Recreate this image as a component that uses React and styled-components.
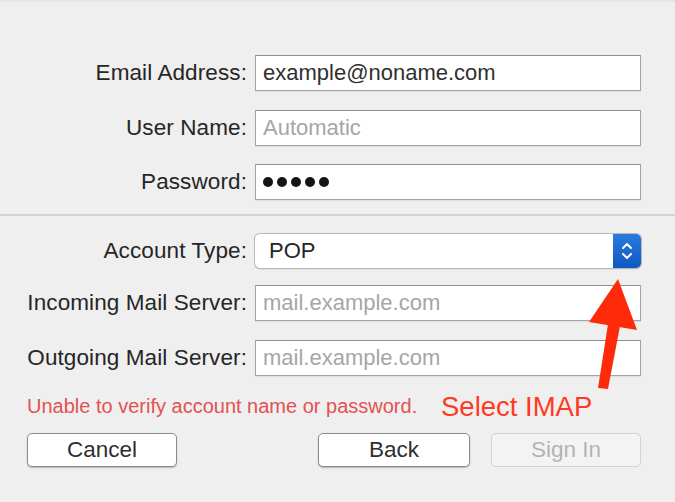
import React from 'react';
import styled, { createGlobalStyle } from 'styled-components';

const GlobalStyle = createGlobalStyle`
  html, body {
    margin: 0;
    padding: 0;
    background: #efefef;
  }
  body {
    font-family: "Liberation Sans", Arial, sans-serif;
  }
`;

const Sheet = styled.div`
  position: relative;
  width: 675px;
  height: 502px;
  overflow: hidden;
  background: #efefef;
  box-shadow: inset 0 3px 3px -2px rgba(0, 0, 0, 0.08);
  box-sizing: border-box;
`;

const Form = styled.div`
  display: grid;
  grid-template-columns: 247px 386px;
  column-gap: 8px;
  row-gap: 18.5px;
  align-items: center;
  padding-top: ${(p) => p.$top}px;
`;

const Label = styled.label`
  text-align: right;
  font-size: 22.5px;
  color: #262626;
  letter-spacing: 0.1px;
  white-space: nowrap;
`;

const Field = styled.div`
  height: 36px;
  box-sizing: border-box;
  background: #fff;
  border: 1.5px solid #a3a3a3;
  border-top-color: #8e8e8e;
  box-shadow: 0 1px 1px rgba(0, 0, 0, 0.06);
  display: flex;
  align-items: center;
  padding-left: 7px;
  font-size: 22px;
  color: ${(p) => (p.$placeholder ? '#a6a6a6' : '#303030')};
  white-space: nowrap;
  overflow: hidden;
`;

const Dots = styled.div`
  display: flex;
  gap: 4px;
`;

const Dot = styled.span`
  width: 10px;
  height: 10px;
  border-radius: 50%;
  background: #151515;
`;

const Separator = styled.div`
  margin-top: 14px;
  height: 1.5px;
  background: #d3d3d3;
`;

const Popup = styled.div`
  height: 34px;
  box-sizing: border-box;
  display: flex;
  background: #fff;
  border-radius: 5px;
  box-shadow: 0 0 0 1px #b8b8b8, 0 1px 1.5px rgba(0, 0, 0, 0.25);
  overflow: hidden;
  margin-top: -2px;
  margin-bottom: -1px;
`;

const PopupValue = styled.div`
  flex: 1;
  display: flex;
  align-items: center;
  padding-left: 14px;
  font-size: 22px;
  color: #262626;
`;

const PopupArrows = styled.div`
  width: 28px;
  display: flex;
  align-items: center;
  justify-content: center;
  background: linear-gradient(#2a7be0, #0f58bf);
`;

const Footer = styled.div`
  position: relative;
  padding: 0 34px 0 27px;
`;

const ErrorText = styled.div`
  margin-top: 19px;
  font-size: 20px;
  line-height: 22px;
  color: #e25252;
`;

const Buttons = styled.div`
  display: flex;
  gap: 21px;
  margin-top: 16px;
`;

const Button = styled.div`
  width: ${(p) => p.$width}px;
  height: 34px;
  box-sizing: border-box;
  display: flex;
  align-items: center;
  justify-content: center;
  border-radius: 5px;
  font-size: 22.5px;
  background: ${(p) => (p.$disabled ? '#f3f3f3' : '#fff')};
  color: ${(p) => (p.$disabled ? '#b3b3b3' : '#2e2e2e')};
  border: 1px solid ${(p) => (p.$disabled ? '#d2d2d2' : '#8c8c8c')};
  box-shadow: ${(p) => (p.$disabled ? 'none' : '0 1px 1.5px rgba(0,0,0,0.25)')};
`;

const Spacer = styled.div`
  flex: 1;
`;

const Annotation = styled.div`
  position: absolute;
  left: 441px;
  top: 391px;
  font-size: 27.5px;
  color: #ff3a22;
  white-space: nowrap;
`;

const Arrow = styled.svg`
  position: absolute;
  left: 580px;
  top: 274px;
`;

function Chevrons() {
  return (
    <svg width="14" height="24" viewBox="0 0 14 24" fill="none">
      <path d="M3 9 L7 5 L11 9" stroke="#fff" strokeWidth="2" strokeLinecap="round" strokeLinejoin="round" />
      <path d="M3 15 L7 19 L11 15" stroke="#fff" strokeWidth="2" strokeLinecap="round" strokeLinejoin="round" />
    </svg>
  );
}

export default function App() {
  return (
    <Sheet>
      <GlobalStyle />
      <Form $top={55}>
        <Label>Email Address:</Label>
        <Field>example@noname.com</Field>
        <Label>User Name:</Label>
        <Field $placeholder>Automatic</Field>
        <Label>Password:</Label>
        <Field>
          <Dots>
            {[0, 1, 2, 3, 4].map((i) => (
              <Dot key={i} />
            ))}
          </Dots>
        </Field>
      </Form>
      <Separator />
      <Form $top={20}>
        <Label>Account Type:</Label>
        <Popup>
          <PopupValue>POP</PopupValue>
          <PopupArrows>
            <Chevrons />
          </PopupArrows>
        </Popup>
        <Label>Incoming Mail Server:</Label>
        <Field $placeholder>mail.example.com</Field>
        <Label>Outgoing Mail Server:</Label>
        <Field $placeholder>mail.example.com</Field>
      </Form>
      <Footer>
        <ErrorText>Unable to verify account name or password.</ErrorText>
        <Buttons>
          <Button $width={150}>Cancel</Button>
          <Spacer />
          <Button $width={152}>Back</Button>
          <Button $width={150} $disabled>Sign In</Button>
        </Buttons>
      </Footer>
      <Annotation>Select IMAP</Annotation>
      <Arrow width="70" height="120" viewBox="0 0 70 120">
        <path d="M38 5 L57 56 L9 48 Z" fill="#ff2a0a" />
        <path d="M28 50 L40 52 L28 115 L18 114 Z" fill="#ff2a0a" />
      </Arrow>
    </Sheet>
  );
}
